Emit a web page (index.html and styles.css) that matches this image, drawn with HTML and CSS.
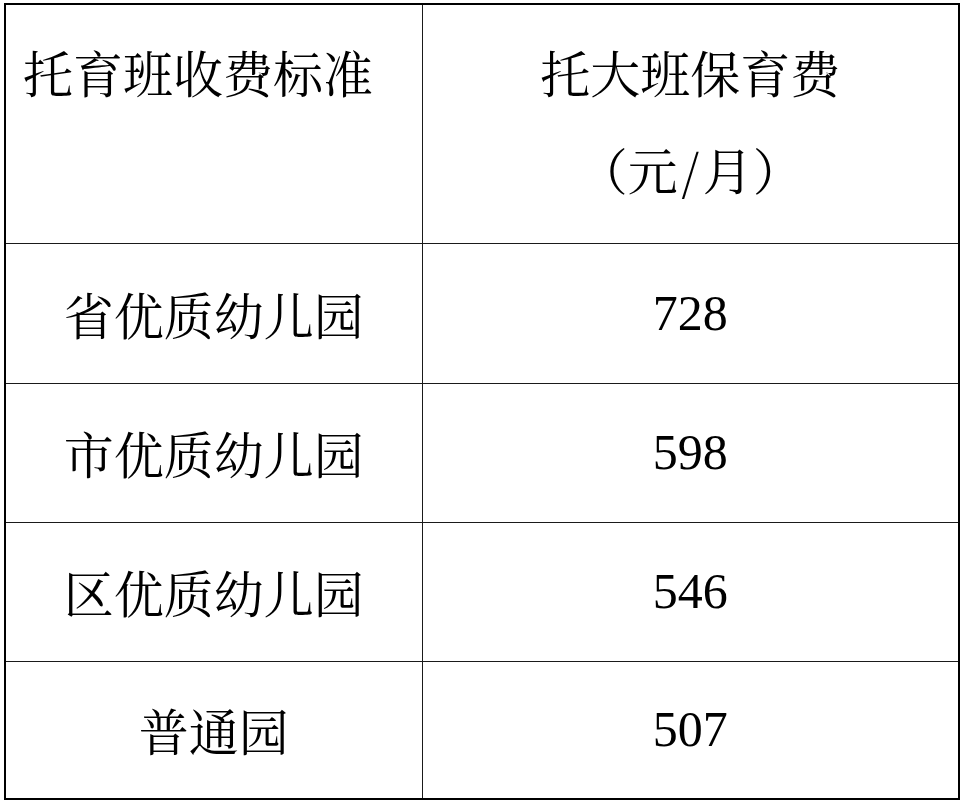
FILE: index.html
```html
<!DOCTYPE html>
<html lang="zh-CN">
<head>
<meta charset="utf-8">
<title>托育班收费标准</title>
<link rel="stylesheet" href="styles.css">
</head>
<body>
<table class="fee-table">
  <colgroup>
    <col class="col-left">
    <col class="col-right">
  </colgroup>
  <tr class="row-head">
    <td class="cell cell-head-left">托育班收费标准</td>
    <td class="cell cell-head-right">托大班保育费<br>（元<span class="slash">/</span>月）</td>
  </tr>
  <tr class="row-a">
    <td class="cell">省优质幼儿园</td>
    <td class="cell num">728</td>
  </tr>
  <tr class="row-b">
    <td class="cell">市优质幼儿园</td>
    <td class="cell num">598</td>
  </tr>
  <tr class="row-b">
    <td class="cell">区优质幼儿园</td>
    <td class="cell num">546</td>
  </tr>
  <tr class="row-c">
    <td class="cell">普通园</td>
    <td class="cell num">507</td>
  </tr>
</table>
</body>
</html>
```

FILE: styles.css
```css
html, body {
  margin: 0;
  padding: 0;
  background: #fff;
}
body {
  padding: 3px 0 0 4px;
}
.fee-table {
  border-collapse: collapse;
  table-layout: fixed;
  width: 954px;
  border: 2px solid #000;
  font-family: "Noto Serif CJK SC", "Liberation Serif", "Noto Sans CJK SC", serif;
  font-size: 50px;
  color: #000;
}
.col-left { width: 417px; }
.col-right { width: 537px; }
.cell {
  border: 1px solid #1a1a1a;
  text-align: center;
  vertical-align: middle;
  padding: 0;
  line-height: 97px;
  white-space: nowrap;
}
.row-head { height: 239px; }
.row-a { height: 140px; }
.row-b { height: 139px; }
.row-c { height: 138px; }
.cell-head-left {
  vertical-align: top;
  text-align: left;
  padding-top: 18px;
  padding-left: 17px;
}
.cell-head-right {
  padding-bottom: 8px;
}
.slash {
  display: inline-block;
  width: 25px;
  text-align: center;
}
.num {
  font-family: "Liberation Serif", serif;
}
```
